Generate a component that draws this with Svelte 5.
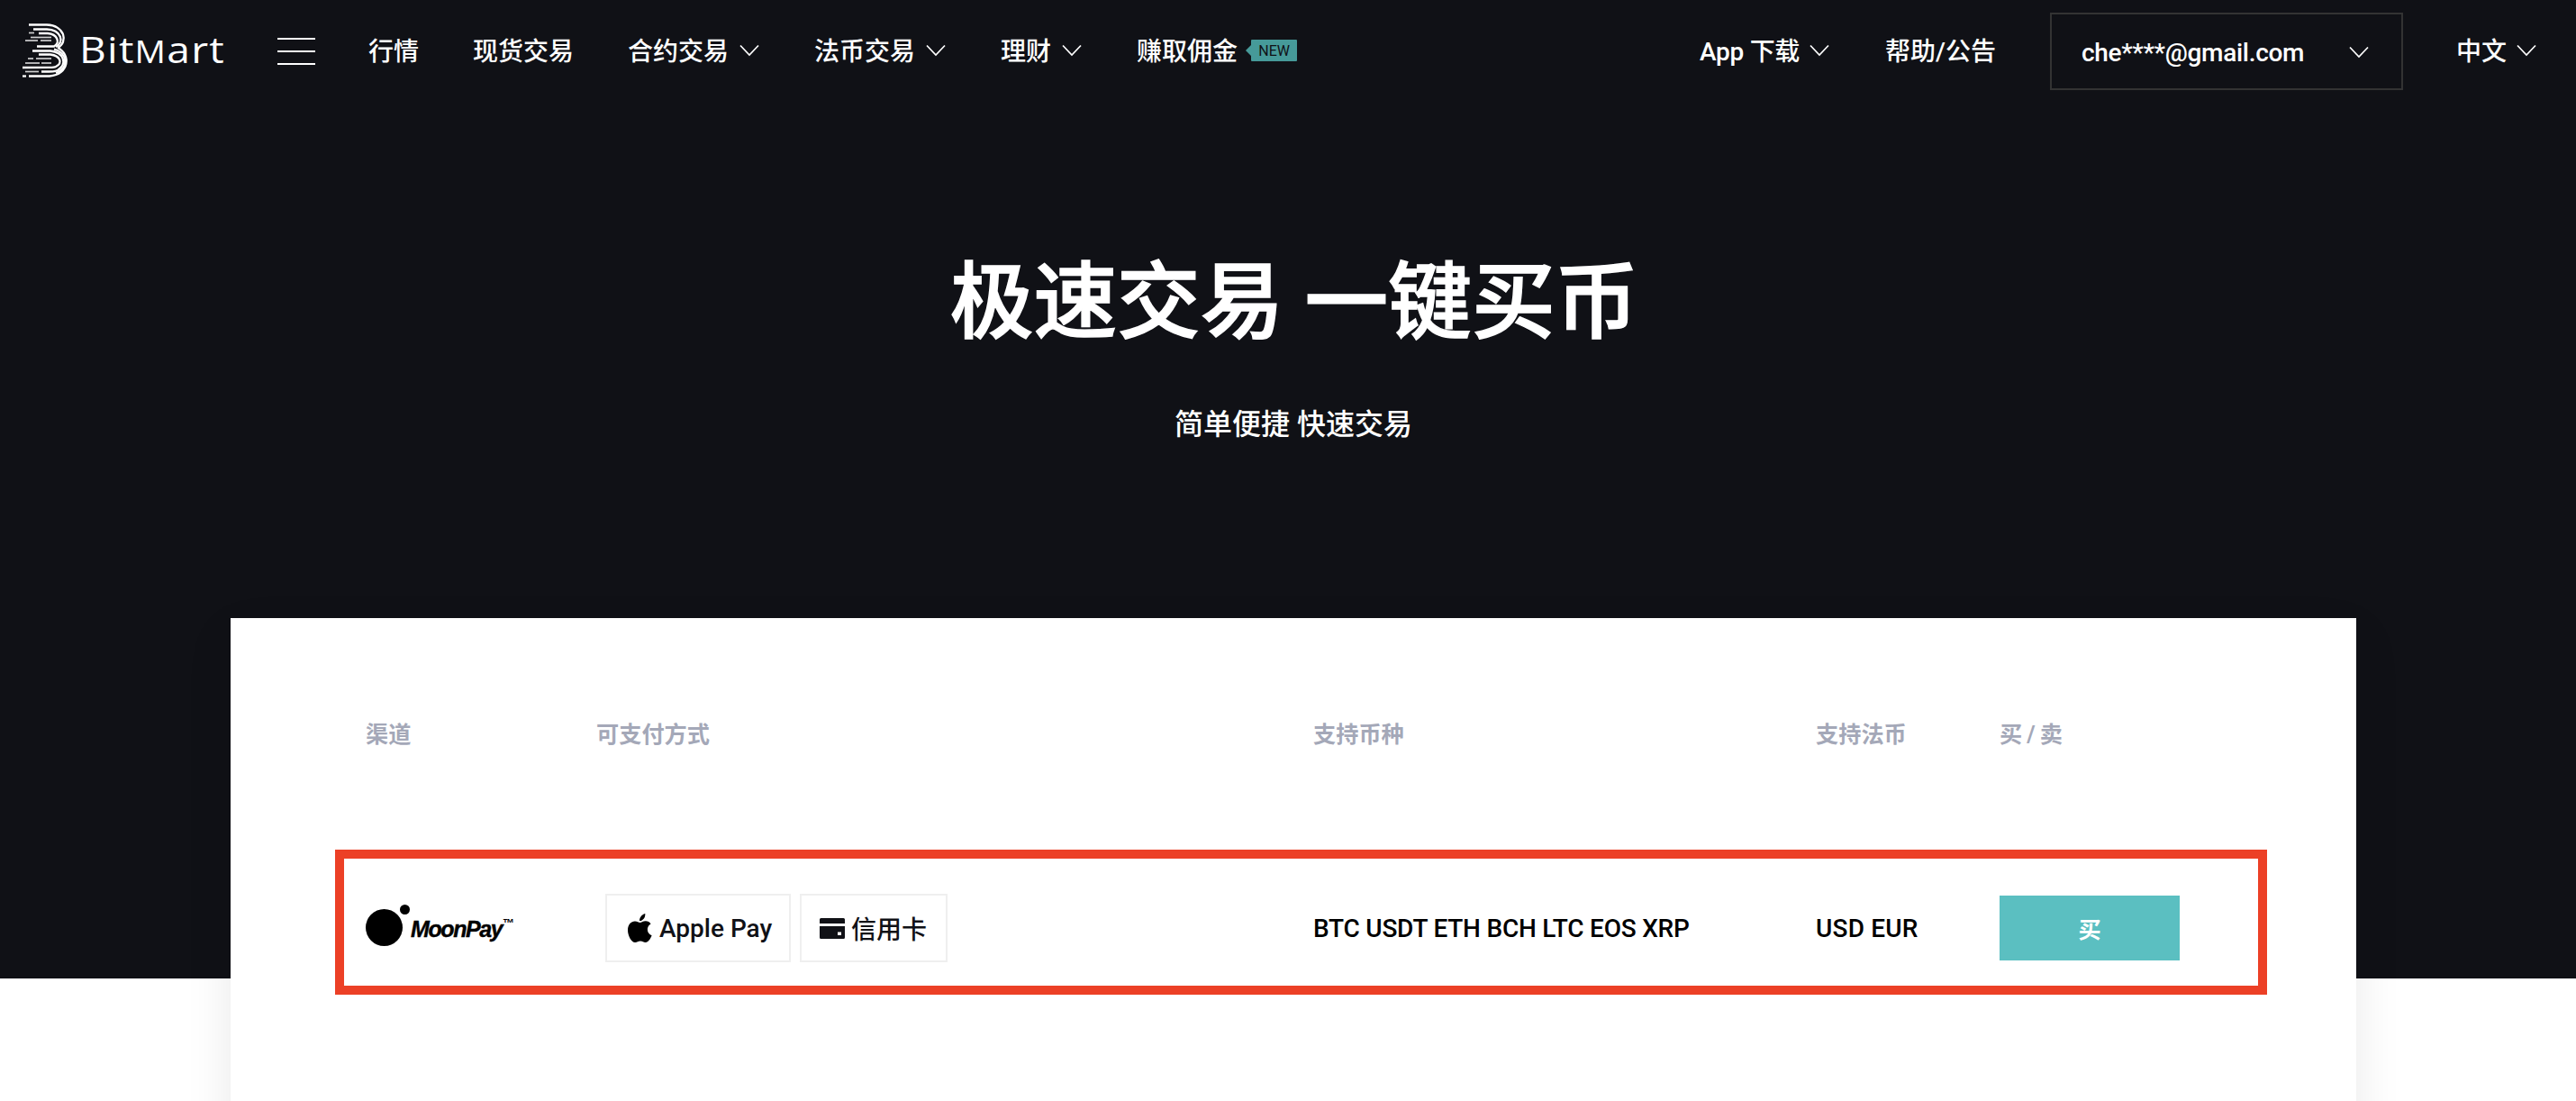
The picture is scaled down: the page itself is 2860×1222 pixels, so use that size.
<script lang="ts">
	const mainNav = [
		{ label: '行情' },
		{ label: '现货交易' },
		{ label: '合约交易', arrow: true },
		{ label: '法币交易', arrow: true },
		{ label: '理财', arrow: true },
		{ label: '赚取佣金', badge: 'NEW' },
	];

	const email = 'che****@gmail.com';

	const heads = ['渠道', '可支付方式', '支持币种', '支持法币', '买 / 卖'];
	const coins = ['BTC', 'USDT', 'ETH', 'BCH', 'LTC', 'EOS', 'XRP'];
	const fiats = ['USD', 'EUR'];

	// logo speed lines: x1, x2, y
	const dashes = [
		[8, 14, 10.5], [10, 33, 15.5], [4, 18, 19], [21, 33, 19],
		[7, 13, 39], [16, 33, 39], [4, 20, 44], [22, 33, 44],
	];
</script>

{#snippet chevron()}
	<svg class="chev" viewBox="0 0 22 14"><path d="M1 1.5 11 12 21 1.5" /></svg>
{/snippet}

<div class="page">
	<header>
		<a class="logo" href="#home" aria-label="BitMart">
			<svg class="mark" viewBox="0 0 52 62">
				{#each dashes as [x1, x2, y]}
					<path class="thin" d="M{x1} {y}H{x2}" />
				{/each}
				<path d="M8 1.500H28C48 2 52 21 40 27" />
				<path d="M13 6.500H28C44 7 48 21 38 26" />
				<path d="M19 11H29C40 12 43 21 36 25.500H17" />
				<path d="M12 30.500H32C47 32 51 45 40 52C37 53.500 35 53.500 22 53.500" />
				<path d="M19 34.500H32C43 36 46 44 38 48C36 49 34 49 1 49" />
				<path d="M40 27C55 34 53 57 31 58.500H8" />
				<path d="M36 28.500C52 33 52 51 38 55" />
				<path class="thin" d="M4 53.500H19" />
				<path d="M1 58.500H5" />
			</svg>
			<span class="word">Bit<small>M</small>art</span>
		</a>
		<div class="burger"><i></i><i></i><i></i></div>
		<nav>
			{#each mainNav as item}
				<a href="#nav">
					{item.label}
					{#if item.arrow}{@render chevron()}{/if}
					{#if item.badge}<span class="new">{item.badge}</span>{/if}
				</a>
			{/each}
		</nav>
		<div class="tools">
			<a class="app" href="#app">App 下载{@render chevron()}</a>
			<a class="help" href="#help">帮助/公告</a>
			<div class="account"><span>{email}</span>{@render chevron()}</div>
			<a class="lang" href="#lang">中文{@render chevron()}</a>
		</div>
	</header>

	<section class="hero">
		<h1>极速交易 一键买币</h1>
		<p>简单便捷 快速交易</p>
	</section>

	<main>
		<div class="row heads">
			{#each heads as h}<span>{h}</span>{/each}
		</div>
		<div class="row channel">
			<div class="moon">
				<svg viewBox="0 0 50 48"><circle cx="20.5" cy="26.5" r="20.5" /><circle cx="43.5" cy="6.5" r="5.5" /></svg>
				<b>MoonPay</b><sup>™</sup>
			</div>
			<div class="pays">
				<div class="pay apple">
					<svg viewBox="0 0 28 34">
						<path d="M20 0C20.500 4.500 17 8.500 13.500 8.300C13 4.500 16.500 .8 20 0Z" />
						<path d="M14 10.200C16 10.200 17.500 8.500 20.500 8.500C23 8.500 25.200 9.800 26.500 11.700C20.800 15 21.800 22.700 27.600 25C26 29 23.500 33 20.500 33C18 33 17.300 31.500 14.500 31.500C11.700 31.500 10.800 33 8.500 33C4 33 0 25 0 19C0 12.500 4 8.700 8.200 8.700C11 8.700 12.500 10.200 14 10.200Z" />
					</svg>
					<span>Apple Pay</span>
				</div>
				<div class="pay credit">
					<svg viewBox="0 0 28 23">
						<path d="M1.500 0H26.500Q28 0 28 1.500V6H0V1.500Q0 0 1.500 0ZM0 9H28V21.500Q28 23 26.500 23H1.500Q0 23 0 21.500ZM20 15.500V19H24V15.500Z" fill-rule="evenodd" />
					</svg>
					<span>信用卡</span>
				</div>
			</div>
			<span class="coins">{coins.join(' ')}</span>
			<span class="fiats">{fiats.join(' ')}</span>
			<button>买</button>
		</div>
	</main>
</div>

<style>
	:global(body) { background: #fff; }
	:global(html) { overflow: hidden; }
	.page { width: 2872px; height: 1222px; overflow: hidden; font-family: Roboto, 'Noto Sans CJK SC', sans-serif; background: linear-gradient(#101116 1086px, #fff 1086px); }
	a { color: inherit; text-decoration: none; display: flex; align-items: center; }
	header { height: 114px; width: 2860px; display: flex; align-items: center; box-sizing: border-box; padding: 0 44px 0 24px; color: #fff; font-size: 28px; font-weight: 500; }
	.logo { width: 284px; }
	.mark { width: 52px; height: 62px; fill: none; stroke: #fff; stroke-width: 2.300; }
	.mark .thin { stroke-width: 1.700; opacity: .8; }
	.word { font: 400 41px/1 'Open Sans', sans-serif; margin-left: 12px; letter-spacing: 1.100px; padding-bottom: 5px; transform: scaleX(1.125); transform-origin: left; }
	.word small { font-size: 34px; }
	.burger { width: 42px; height: 30px; display: flex; flex-direction: column; justify-content: space-between; }
	.burger i { height: 2px; background: #fff; }
	nav { display: flex; margin-left: 59px; gap: 60px; padding-bottom: 5px; }
	.chev { position: relative; top: 1px; width: 22px; height: 14px; margin-left: 11px; fill: none; stroke: #fff; stroke-width: 1.700; }
	nav .chev { margin: 0 1px 0 12px; }
	.new { position: relative; top: 1px; margin-left: 15px; width: 51px; height: 24px; font: 400 16px/25px Roboto, sans-serif; text-align: center; background: #469a99; color: #101116; border-radius: 1px; }
	.new::before { content: ''; position: absolute; left: -6px; top: 6px; border: 6px solid transparent; border-left: 0; border-right-color: #469a99; }
	.tools { display: flex; align-items: center; margin-left: auto; }
	.tools a { padding-bottom: 5px; }
	.app { letter-spacing: -.3px; }
	.help { margin: 0 60px 0 62px; }
	.account { width: 392px; height: 86px; box-sizing: border-box; border: 2px solid #333; display: flex; align-items: center; justify-content: space-between; padding: 0 36px 0 33px; margin-right: 59px; }
	.account span { letter-spacing: -.3px; padding-top: 2px; }
	.hero { text-align: center; color: #fff; height: 572px; }
	h1 { margin: 0; padding: 155px 0 0 2px; font-size: 92.700px; line-height: 136px; font-weight: 500; -webkit-text-stroke: 1.500px #fff; }
	p { margin: 0; padding-top: 42px; font-size: 32px; line-height: 48px; font-weight: 500; }
	main { margin: 0 256px; height: 700px; background: #fff; box-shadow: 0 20px 50px rgba(0, 0, 0, .09); overflow: hidden; }
	.row { display: grid; grid-template-columns: 256px 796px 558px 204px 200px; align-items: center; }
	.heads { margin: 105px 0 0 150px; height: 44px; color: #a4a8b8; font-size: 25.200px; font-weight: 700; word-spacing: -1.200px; }
	.channel { margin: 108px 99px 0 116px; height: 161px; box-sizing: border-box; border: 10px solid #ec4026; padding: 13px 0 0 24px; font-size: 28px; font-weight: 500; color: #000; }
	.moon { display: flex; align-items: center; height: 48px; margin-top: -6px; }
	.moon svg { width: 50px; height: 48px; }
	.moon b { font: italic 700 25px/1 'Liberation Sans', sans-serif; letter-spacing: -1.400px; padding-top: 9px; -webkit-text-stroke: .4px #000; }
	.moon sup { font: 700 13px/1 'Liberation Sans', sans-serif; margin-left: 1px; padding-bottom: 5px; }
	.pays { display: flex; gap: 10px; padding-left: 10px; }
	.pay { width: 206px; height: 76px; box-sizing: border-box; border: 2px solid #efefef; display: flex; align-items: center; padding-left: 23px; color: #101116; white-space: nowrap; }
	.pay svg { flex: none; width: 27px; height: 33px; margin-right: 8px; fill: #000; }
	.credit { width: 164px; padding-left: 20px; }
	.credit svg { width: 28px; height: 23px; margin-right: 7px; fill: #101116; }
	.coins { letter-spacing: -.230px; }
	.fiats { letter-spacing: .2px; }
	button { width: 200px; height: 72px; border: 0; background: #5bbfc1; color: #fff; font: 700 25.200px 'Noto Sans CJK SC', sans-serif; }
</style>
